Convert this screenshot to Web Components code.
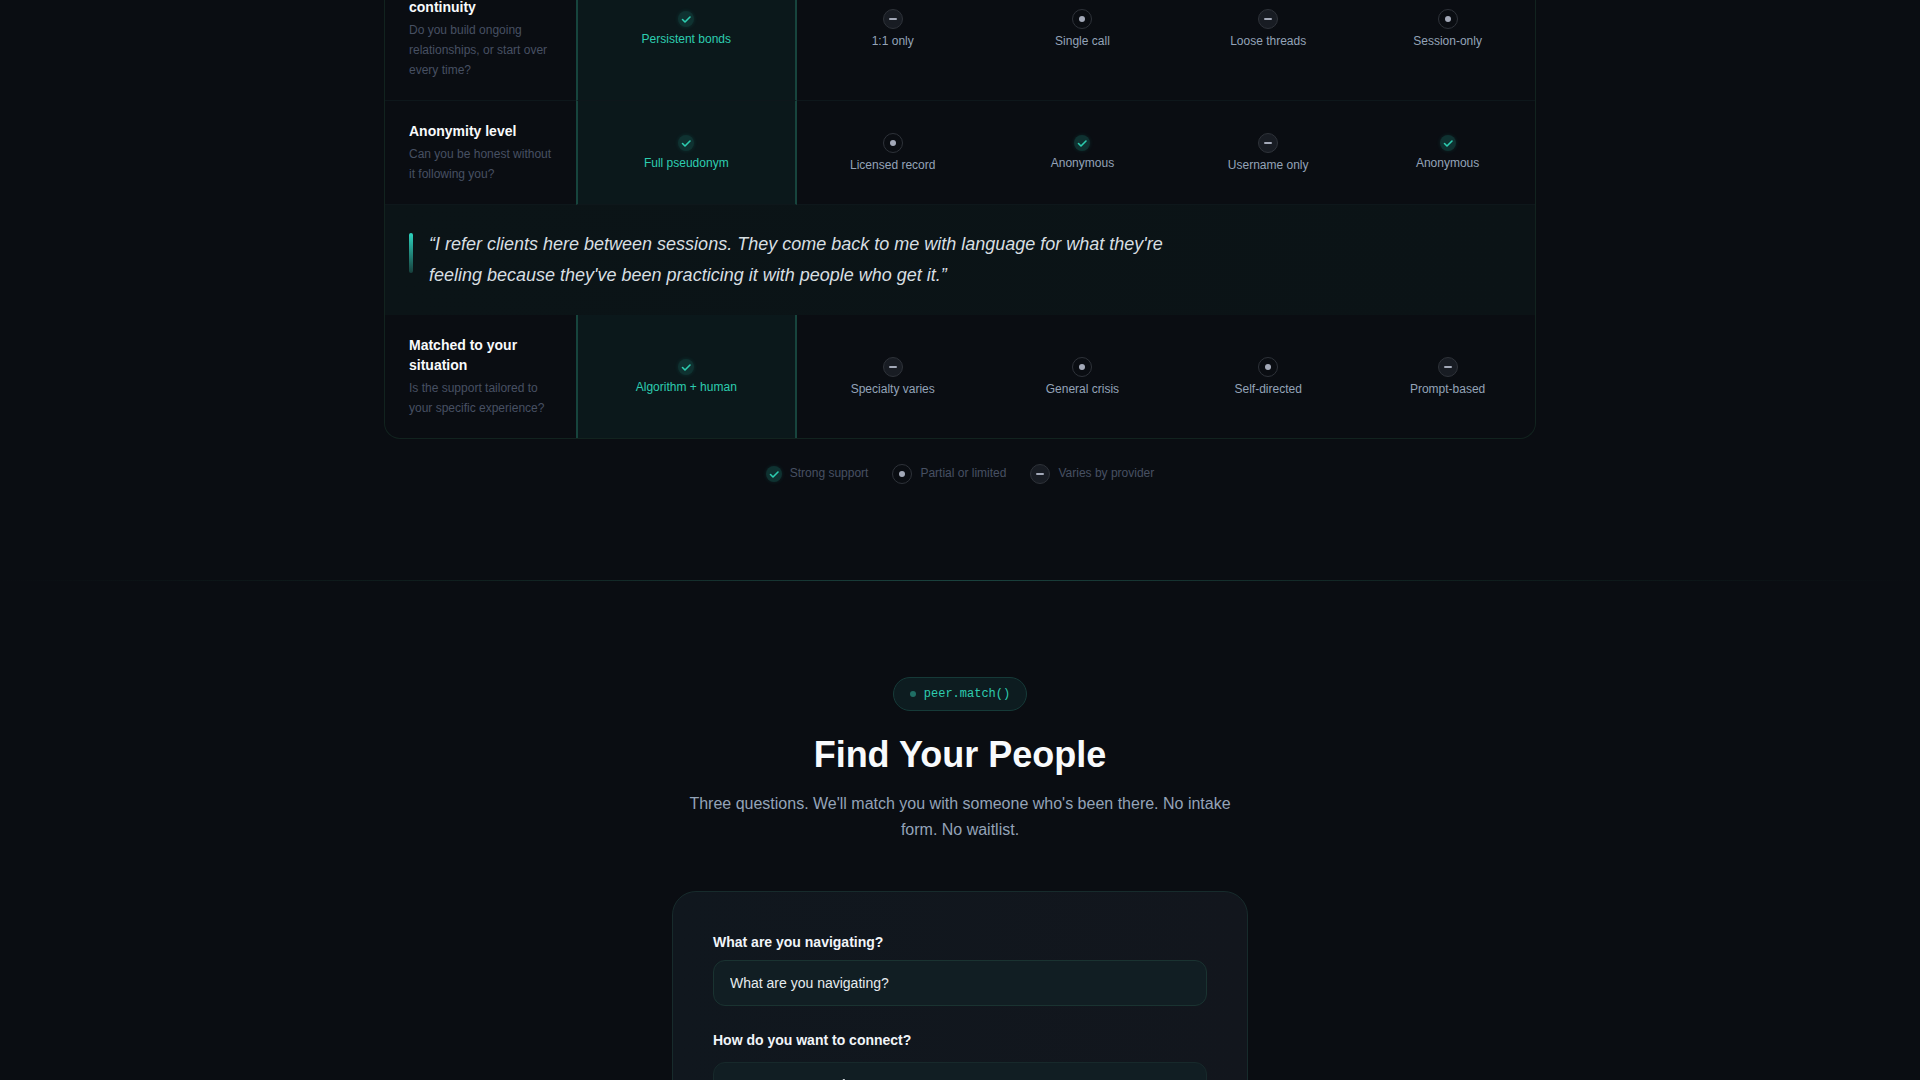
<!DOCTYPE html>
<html lang="en">
<head>
<meta charset="UTF-8">
<meta name="viewport" content="width=device-width, initial-scale=1.0">
<title>Find Your People</title>
<style>
  html {
    background: #0a0d12;
  }

  body {
    margin: 0;
    overflow: hidden;
    height: 100vh;
    font-family: "Liberation Sans", Arial, sans-serif;
    color: #f8fafc;
  }
</style>
</head>
<body>
<comparison-section></comparison-section>
<match-section></match-section>

<script>
class StatusIcon extends HTMLElement {
  connectedCallback() {
    const shapes = {
      yes: '<path d="M4.5 8.5l2.5 2.5 5-5" fill="none" stroke="currentColor" stroke-width="1.6" stroke-linecap="round" stroke-linejoin="round"/>',
      partial: '<circle cx="8" cy="8" r="3" fill="currentColor"/>',
      varies: '<path d="M5 8h6" stroke="currentColor" stroke-width="2" stroke-linecap="round"/>'
    };
    this.attachShadow({ mode: 'open' });
    this.shadowRoot.innerHTML = `
      <style>
        :host {
          display: inline-flex;
          align-items: center;
          justify-content: center;
          box-sizing: border-box;
          width: 20px;
          height: 20px;
          border: 1px solid #2e3239;
          border-radius: 50%;
          color: #a3a9b8;
        }

        :host([kind="yes"]) {
          width: 16px;
          height: 16px;
          border: none;
          background: #0f3231;
          box-shadow: 0 0 4px rgba(45, 212, 191, 0.12);
          color: #2dcdb0;
        }

        :host([kind="varies"]) {
          background: #181c23;
        }

        svg {
          display: block;
          flex: none;
        }
      </style>
      <svg width="16" height="16" viewBox="0 0 16 16" aria-hidden="true">${shapes[this.getAttribute('kind')]}</svg>
    `;
  }
}

class StatusCell extends HTMLElement {
  connectedCallback() {
    this.attachShadow({ mode: 'open' });
    this.shadowRoot.innerHTML = `
      <style>
        :host {
          display: flex;
          flex-direction: column;
          align-items: center;
          gap: 3px;
          padding-top: 2px;
          font-size: 12px;
          line-height: 18px;
        }
      </style>
      <status-icon kind="${this.getAttribute('kind')}"></status-icon>
      <span><slot></slot></span>
    `;
  }
}

class ComparisonSection extends HTMLElement {
  connectedCallback() {
    this.attachShadow({ mode: 'open' });
    this.shadowRoot.innerHTML = `
      <style>
        :host {
          display: block;
        }

        /* first row starts above the fold */
        .wrap {
          max-width: 1152px;
          margin: -43px auto 0;
        }

        .frame {
          border: 1px solid #12231f;
          border-top: none;
          border-radius: 0 0 16px 16px;
          overflow: hidden;
        }

        table {
          width: 100%;
          table-layout: fixed;
          border-collapse: separate;
          border-spacing: 0;
        }

        col:nth-child(1) { width: 16.6%; }
        col:nth-child(2) { width: 19.2%; }
        col:nth-child(3) { width: 16.7%; }
        col:nth-child(4) { width: 16.3%; }
        col:nth-child(5) { width: 16%; }

        th, td {
          padding: 20px 24px;
          vertical-align: middle;
          border-bottom: 1px solid #0e171b;
          color: #94a3b8;
        }

        tr:last-child > * {
          border-bottom: none;
        }

        th {
          text-align: left;
          font-weight: normal;
        }

        th strong {
          display: block;
          font-size: 14px;
          line-height: 20px;
          color: #f8fafc;
        }

        th span {
          display: block;
          margin-top: 3px;
          font-size: 12px;
          line-height: 20px;
          color: #475062;
        }

        td.ours {
          padding: 20px 16px;
          background: #0b181b;
          border-left: 2px solid #17443d;
          border-right: 2px solid #17443d;
          color: #2dcdb0;
        }

        td.quote {
          padding: 24px;
          border-bottom: none;
          background: linear-gradient(90deg, #0b1417, #0b1316);
        }

        figure {
          display: flex;
          align-items: flex-start;
          gap: 16px;
          margin: 0;
        }

        figure::before {
          content: "";
          flex: none;
          width: 4px;
          height: 40px;
          margin-top: 4px;
          border-radius: 2px;
          background: linear-gradient(#2dd4bf, #173f3c);
        }

        blockquote {
          margin: 0;
          max-width: 768px;
          font-size: 18px;
          font-style: italic;
          line-height: 31px;
          color: #d8dfe2;
        }

        ul {
          display: flex;
          justify-content: center;
          gap: 24px;
          margin: 0;
          padding: 24px 0 96px;
          list-style: none;
        }

        li {
          display: flex;
          align-items: center;
          gap: 8px;
          font-size: 12px;
          line-height: 21px;
          color: #475062;
        }
      </style>
      <div class="wrap">
        <div class="frame">
          <table>
            <colgroup><col><col><col><col><col><col></colgroup>
            <tbody>
              <tr>
                <th scope="row"><strong><br>continuity</strong><span>Do you build ongoing relationships, or start over every time?</span></th>
                <td class="ours"><status-cell kind="yes">Persistent bonds</status-cell></td>
                <td><status-cell kind="varies">1:1 only</status-cell></td>
                <td><status-cell kind="partial">Single call</status-cell></td>
                <td><status-cell kind="varies">Loose threads</status-cell></td>
                <td><status-cell kind="partial">Session-only</status-cell></td>
              </tr>
              <tr>
                <th scope="row"><strong>Anonymity level</strong><span>Can you be honest without it following you?</span></th>
                <td class="ours"><status-cell kind="yes">Full pseudonym</status-cell></td>
                <td><status-cell kind="partial">Licensed record</status-cell></td>
                <td><status-cell kind="yes">Anonymous</status-cell></td>
                <td><status-cell kind="varies">Username only</status-cell></td>
                <td><status-cell kind="yes">Anonymous</status-cell></td>
              </tr>
              <tr>
                <td class="quote" colspan="6">
                  <figure><blockquote>“I refer clients here between sessions. They come back to me with language for what they're feeling because they've been practicing it with people who get it.”</blockquote></figure>
                </td>
              </tr>
              <tr>
                <th scope="row"><strong>Matched to your situation</strong><span>Is the support tailored to your specific experience?</span></th>
                <td class="ours"><status-cell kind="yes">Algorithm + human</status-cell></td>
                <td><status-cell kind="varies">Specialty varies</status-cell></td>
                <td><status-cell kind="partial">General crisis</status-cell></td>
                <td><status-cell kind="partial">Self-directed</status-cell></td>
                <td><status-cell kind="varies">Prompt-based</status-cell></td>
              </tr>
            </tbody>
          </table>
        </div>
        <ul>
          <li><status-icon kind="yes"></status-icon>Strong support</li>
          <li><status-icon kind="partial"></status-icon>Partial or limited</li>
          <li><status-icon kind="varies"></status-icon>Varies by provider</li>
        </ul>
      </div>
    `;
  }
}

class CodeBadge extends HTMLElement {
  connectedCallback() {
    this.attachShadow({ mode: 'open' });
    this.shadowRoot.innerHTML = `
      <style>
        :host {
          display: inline-flex;
          align-items: center;
          gap: 8px;
          padding: 6px 16px;
          border: 1px solid #163a38;
          border-radius: 999px;
          background: #0d1c20;
          font-family: "Liberation Mono", "Courier New", monospace;
          font-size: 12px;
          line-height: 20px;
          color: #2dcdb0;
        }

        :host::before {
          content: "";
          width: 6px;
          height: 6px;
          border-radius: 50%;
          background: #1f6e64;
        }
      </style>
      <slot></slot>
    `;
  }
}

class MatchSection extends HTMLElement {
  connectedCallback() {
    this.attachShadow({ mode: 'open' });
    this.shadowRoot.innerHTML = `
      <style>
        :host {
          display: block;
        }

        :host::before {
          content: "";
          display: block;
          height: 1px;
          background: linear-gradient(90deg, transparent, #10201f 25%, #1a423e 50%, #10201f 75%, transparent);
        }

        .inner {
          max-width: 576px;
          margin: 0 auto;
          padding-top: 96px;
          text-align: center;
        }

        h2 {
          margin: 24px 0 16px;
          font-size: 36px;
          line-height: 40px;
          color: #f8fafc;
        }

        p {
          margin: 0 0 48px;
          font-size: 16px;
          line-height: 26px;
          color: #94a3b8;
        }

        form {
          box-sizing: border-box;
          padding: 40px;
          border: 1px solid #172b2c;
          border-radius: 24px;
          background: linear-gradient(90deg, #10171e, #12161d);
          text-align: left;
        }

        label, legend {
          display: block;
          padding: 0;
          margin-bottom: 8px;
          font-size: 14px;
          font-weight: bold;
          line-height: 20px;
          color: #f1f5f9;
        }

        select {
          display: block;
          box-sizing: border-box;
          width: 100%;
          height: 46px;
          margin-bottom: 24px;
          padding: 0 16px;
          border: 1px solid #1a3331;
          border-radius: 12px;
          background: #111e23;
          font: 14px "Liberation Sans", Arial, sans-serif;
          color: #e6ecef;
          appearance: none;
        }

        fieldset {
          margin: 0;
          padding: 0;
          border: none;
        }

        legend {
          margin-bottom: 12px;
        }

        .options {
          display: grid;
          grid-template-columns: 1fr 1fr;
          min-height: 64px;
          padding: 16px 0;
          border: 1px solid #17292b;
          border-radius: 12px;
          background: #111e23;
        }

        .options label {
          margin: 0;
          text-align: center;
        }

        .options svg {
          display: block;
          margin: 0 auto;
        }

        .options input {
          accent-color: #2dd4bf;
        }
      </style>
      <div class="inner">
        <code-badge>peer.match()</code-badge>
        <h2>Find Your People</h2>
        <p>Three questions. We'll match you with someone who's been there. No intake form. No waitlist.</p>
        <form>
          <label for="topic">What are you navigating?</label>
          <select id="topic"><option>What are you navigating?</option></select>
          <fieldset>
            <legend>How do you want to connect?</legend>
            <div class="options">
              <label>
                <svg width="16" height="16" viewBox="0 0 16 16" fill="none" stroke="#e6ecef" stroke-width="2" stroke-linejoin="round" aria-hidden="true"><path d="M15 1L5 12l-3 1 1-3z"/></svg>
                <input type="radio" name="mode" aria-label="Write">
              </label>
            </div>
          </fieldset>
        </form>
      </div>
    `;
  }
}

customElements.define('status-icon', StatusIcon);
customElements.define('status-cell', StatusCell);
customElements.define('comparison-section', ComparisonSection);
customElements.define('code-badge', CodeBadge);
customElements.define('match-section', MatchSection);
</script>
</body>
</html>
